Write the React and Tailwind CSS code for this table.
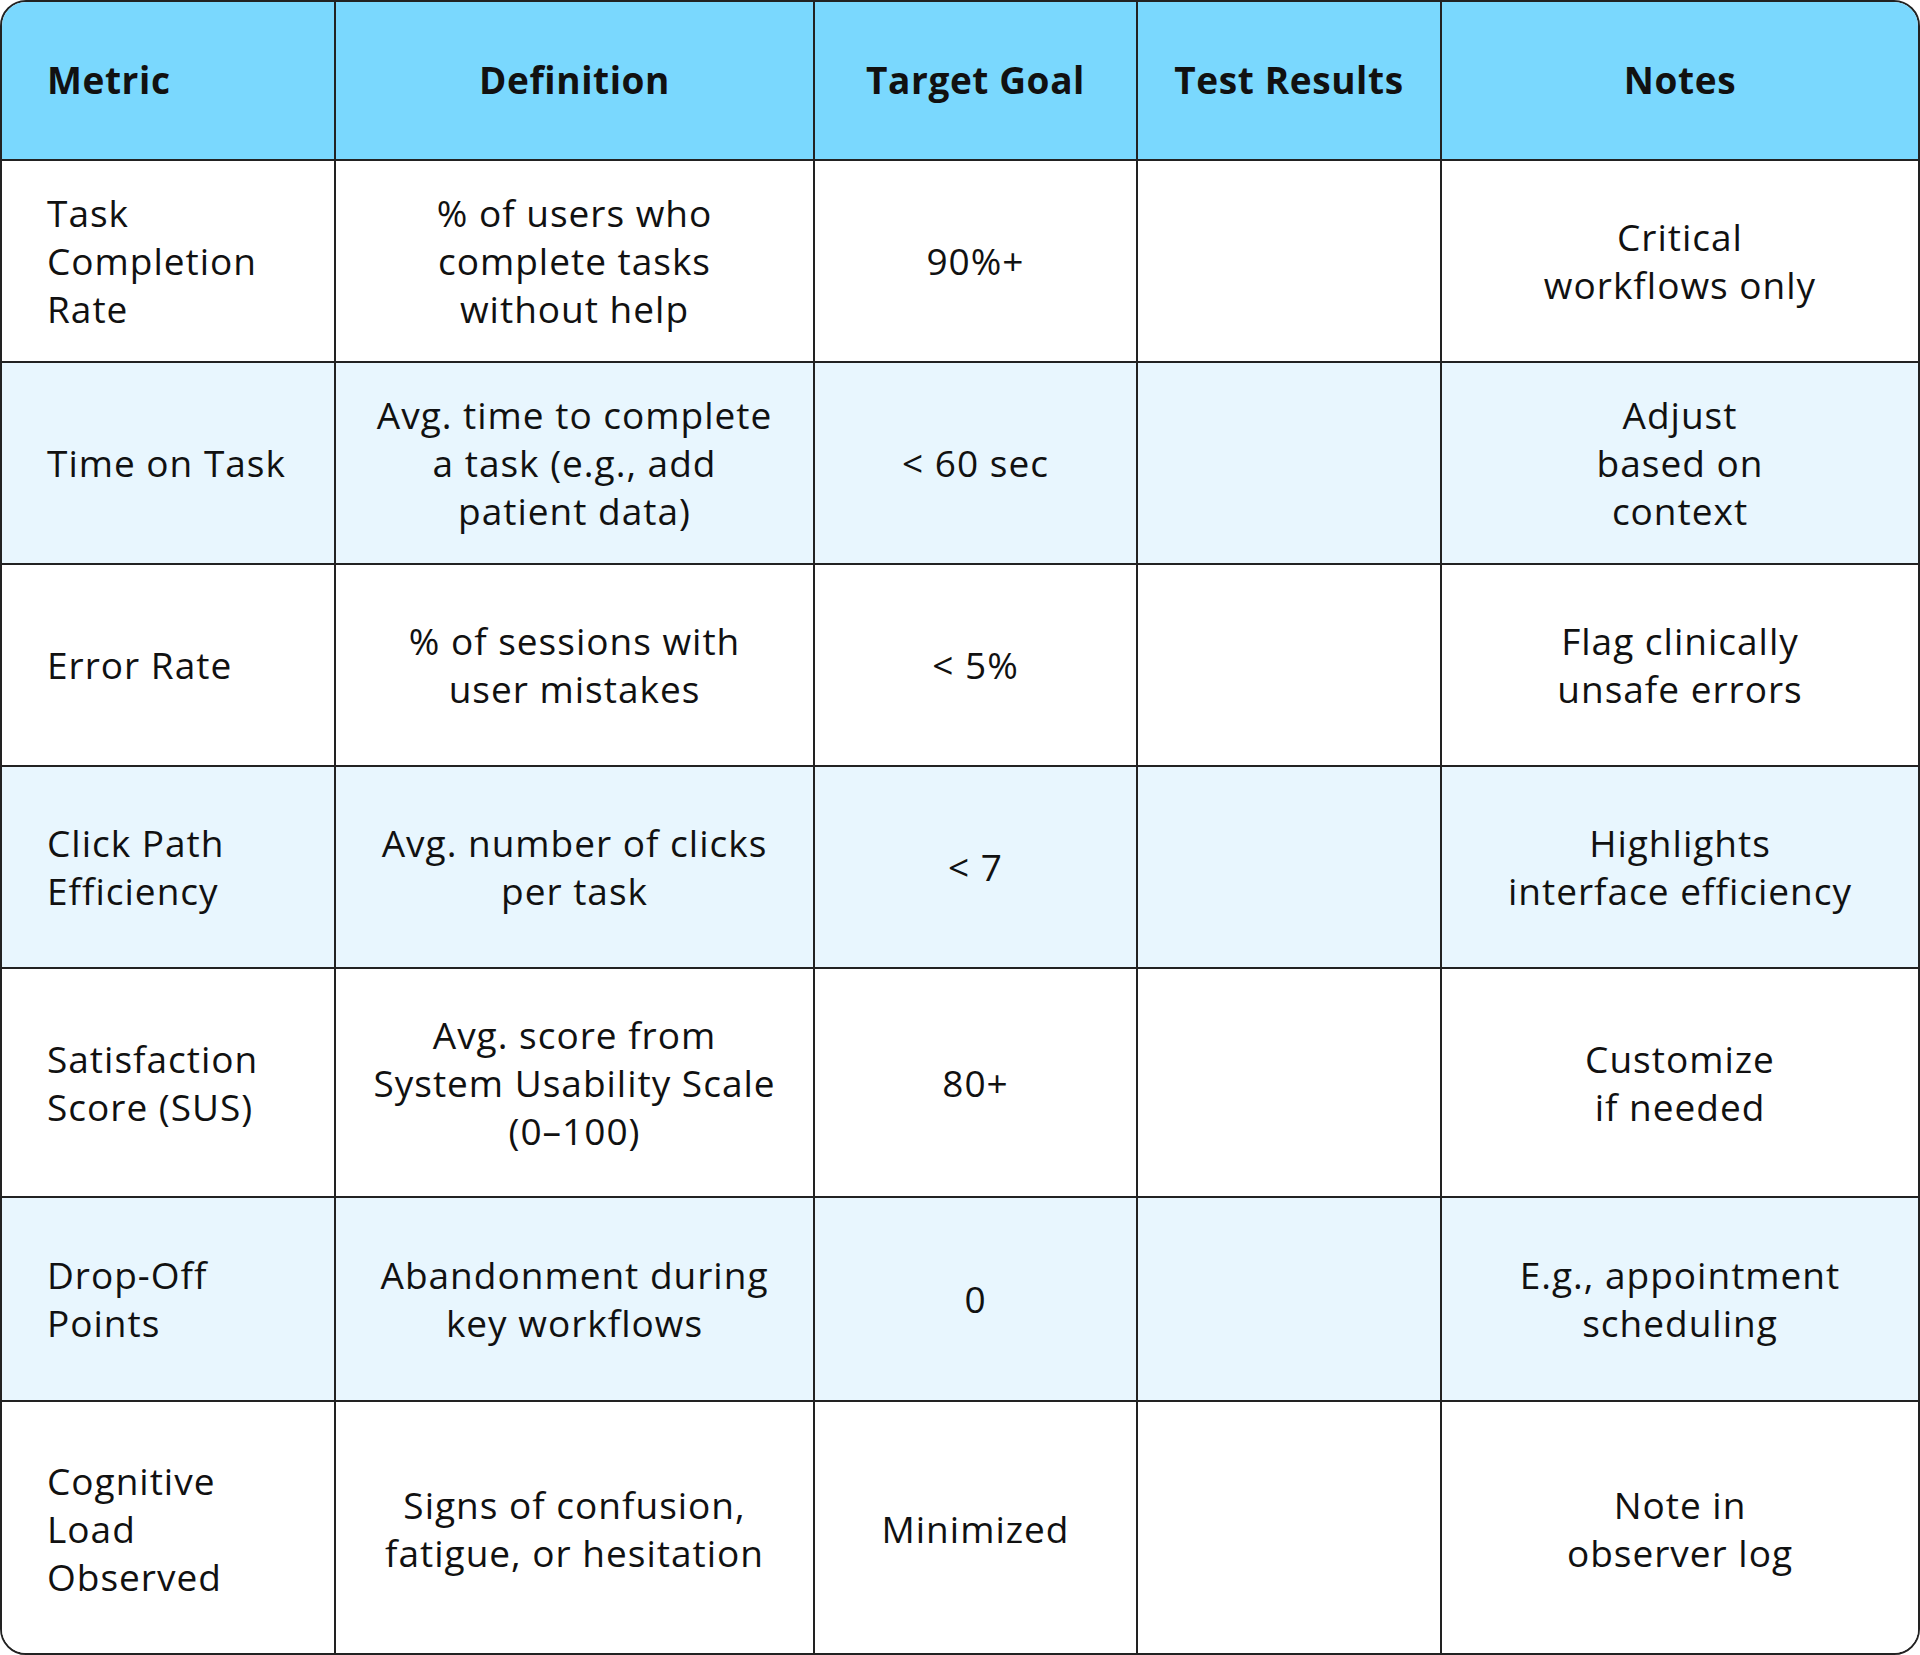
import React from "react";

const rows = [
  { m: ["Task", "Completion", "Rate"], d: ["% of users who", "complete tasks", "without help"], t: "90%+", n: ["Critical", "workflows only"], h: "h-[202px]", alt: false },
  { m: ["Time on Task"], d: ["Avg. time to complete", "a task (e.g., add", "patient data)"], t: "< 60 sec", n: ["Adjust", "based on", "context"], h: "h-[202px]", alt: true },
  { m: ["Error Rate"], d: ["% of sessions with", "user mistakes"], t: "< 5%", n: ["Flag clinically", "unsafe errors"], h: "h-[202px]", alt: false },
  { m: ["Click Path", "Efficiency"], d: ["Avg. number of clicks", "per task"], t: "< 7", n: ["Highlights", "interface efficiency"], h: "h-[202px]", alt: true },
  { m: ["Satisfaction", "Score (SUS)"], d: ["Avg. score from", "System Usability Scale", "(0–100)"], t: "80+", n: ["Customize", "if needed"], h: "h-[229px]", alt: false },
  { m: ["Drop-Off", "Points"], d: ["Abandonment during", "key workflows"], t: "0", n: ["E.g., appointment", "scheduling"], h: "h-[204px]", alt: true },
  { m: ["Cognitive", "Load", "Observed"], d: ["Signs of confusion,", "fatigue, or hesitation"], t: "Minimized", n: ["Note in", "observer log"], h: "h-[255px]", alt: false },
];

function Lines({ lines }) {
  return (
    <div className="whitespace-nowrap">
      {lines.map((l, i) => (
        <div key={i}>{l}</div>
      ))}
    </div>
  );
}

export default function App() {
  const cols = "grid grid-cols-[332px_479px_323px_304px_1fr]";
  return (
    <div
      className="w-[1920px] h-[1655px] bg-white text-[#111111]"
      style={{ fontFamily: '"Open Sans", "Noto Sans", sans-serif' }}
    >
      <div className="w-full h-full rounded-[26px] border-2 border-[#222222] overflow-hidden flex flex-col text-[37px] leading-[48px]">
        <div className={`${cols} h-[157px] bg-[#7ad8fe] font-bold tracking-[0.6px] shrink-0`}>
          <div className="flex items-center pl-[45px] pb-[2px]">Metric</div>
          <div className="flex items-center justify-center border-l-2 border-[#222222] pb-[2px]">Definition</div>
          <div className="flex items-center justify-center border-l-2 border-[#222222] pb-[2px]">Target Goal</div>
          <div className="flex items-center justify-center border-l-2 border-[#222222] pb-[2px]">Test Results</div>
          <div className="flex items-center justify-center border-l-2 border-[#222222] pb-[2px]">Notes</div>
        </div>
        {rows.map((r, i) => (
          <div
            key={i}
            className={`${cols} ${r.h} shrink-0 border-t-2 border-[#222222] tracking-[1px] ${r.alt ? "bg-[#e8f6fe]" : "bg-white"}`}
          >
            <div className="flex items-center pl-[45px]">
              <Lines lines={r.m} />
            </div>
            <div className="flex items-center justify-center text-center border-l-2 border-[#222222]">
              <Lines lines={r.d} />
            </div>
            <div className="flex items-center justify-center text-center border-l-2 border-[#222222]">
              {r.t}
            </div>
            <div className="border-l-2 border-[#222222]" />
            <div className="flex items-center justify-center text-center border-l-2 border-[#222222]">
              <Lines lines={r.n} />
            </div>
          </div>
        ))}
      </div>
    </div>
  );
}
